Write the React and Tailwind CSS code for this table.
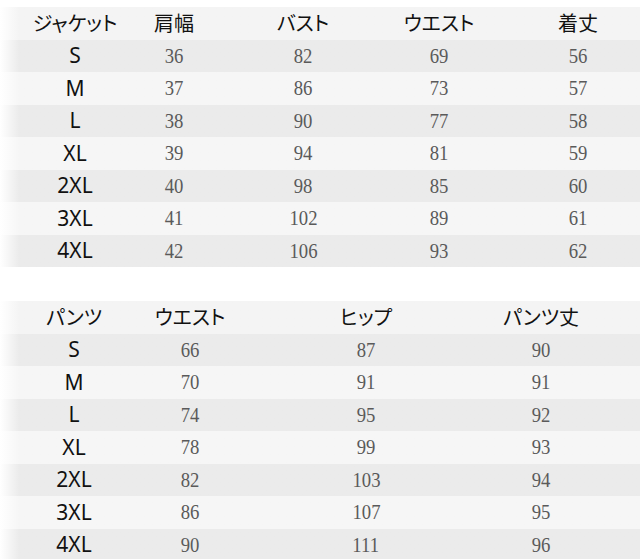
import React from 'react';

const jacket = {
  head: ['ジャケット', '肩幅', 'バスト', 'ウエスト', '着丈'],
  rows: [
    ['S', 36, 82, 69, 56],
    ['M', 37, 86, 73, 57],
    ['L', 38, 90, 77, 58],
    ['XL', 39, 94, 81, 59],
    ['2XL', 40, 98, 85, 60],
    ['3XL', 41, 102, 89, 61],
    ['4XL', 42, 106, 93, 62],
  ],
  // left margin of each 80px cell
  gaps: ['ml-[35px]', 'ml-[19px]', 'ml-[49px]', 'ml-[56px]', 'ml-[59px]'],
};

const pants = {
  head: ['パンツ', 'ウエスト', 'ヒップ', 'パンツ丈'],
  rows: [
    ['S', 66, 87, 90],
    ['M', 70, 91, 91],
    ['L', 74, 95, 92],
    ['XL', 78, 99, 93],
    ['2XL', 82, 103, 94],
    ['3XL', 86, 107, 95],
    ['4XL', 90, 111, 96],
  ],
  gaps: ['ml-[34px]', 'ml-[36px]', 'ml-[96px]', 'ml-[95px]'],
};

const jp = "font-['Noto_Sans_CJK_JP','Noto_Sans',sans-serif]";

const SizeTable = ({ data }) => (
  <div className="flex flex-col">
    {/* header */}
    <div className="flex items-center h-[32.5px] bg-linear-to-r from-white to-[#f4f4f4] to-3%">
      {data.head.map((h, i) => (
        <div
          key={i}
          className={`${data.gaps[i]} w-20 shrink-0 flex justify-center whitespace-nowrap text-[20px] leading-none text-[#111] ${jp} [font-feature-settings:'palt']`}
        >
          {h}
        </div>
      ))}
    </div>
    {data.rows.map((row, r) => (
      <div
        key={r}
        className={`flex items-center h-[32.5px] bg-linear-to-r from-white to-3% ${
          r % 2 === 0 ? 'to-[#ebebeb]' : 'to-[#f6f6f6]'
        }`}
      >
        {row.map((v, i) =>
          i === 0 ? (
            <div
              key={i}
              className={`${data.gaps[i]} w-20 shrink-0 flex justify-center text-[21px] leading-none text-[#111] font-['Noto_Sans','Open_Sans',sans-serif]`}
            >
              {v}
            </div>
          ) : (
            <div
              key={i}
              className={`${data.gaps[i]} w-20 shrink-0 flex justify-center text-[22px] leading-none text-[#5a5a5a] font-['Liberation_Serif',serif]`}
            >
              <span className="inline-block scale-x-[0.85]">{v}</span>
            </div>
          )
        )}
      </div>
    ))}
  </div>
);

export default function App() {
  return (
    <div className="w-[640px] h-[559px] overflow-hidden bg-white pt-[7px]">
      <SizeTable data={jacket} />
      <div className="h-[34px]" />
      <SizeTable data={pants} />
    </div>
  );
}
